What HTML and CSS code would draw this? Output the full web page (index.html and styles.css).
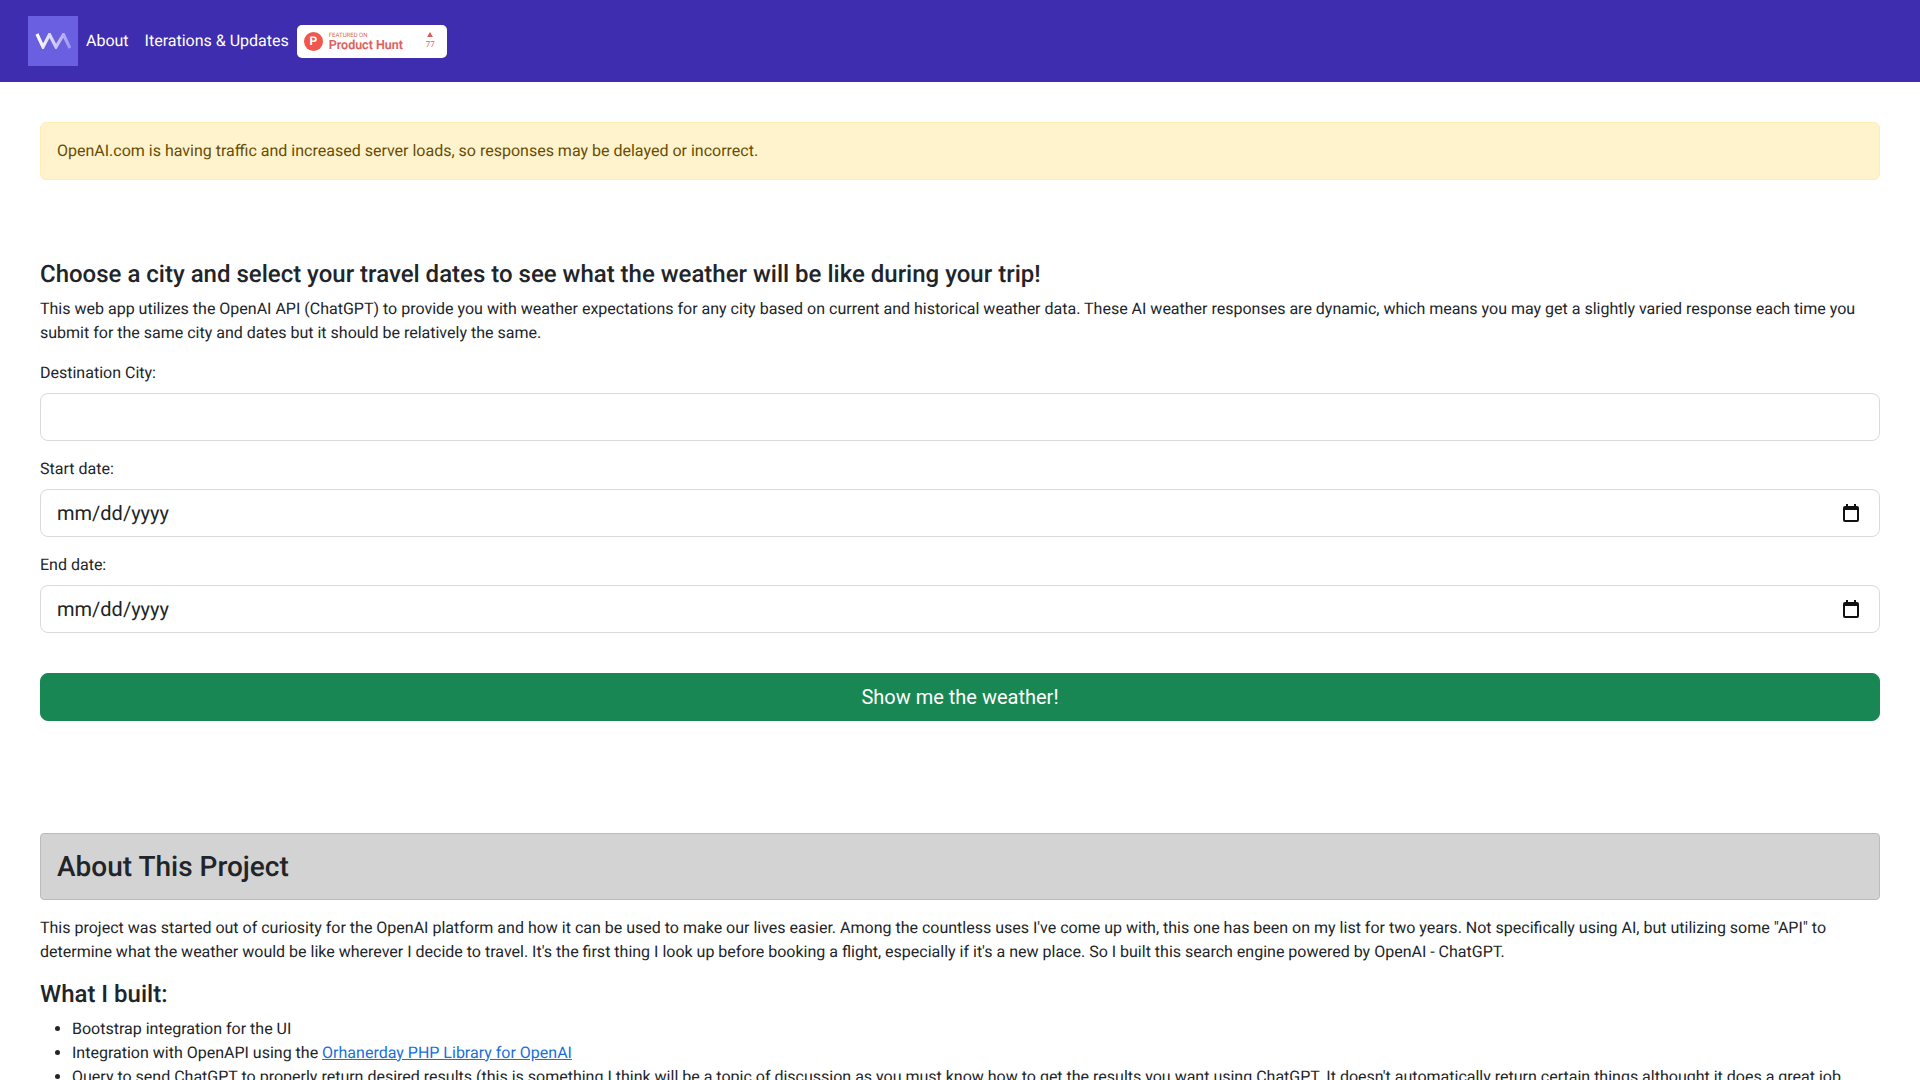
FILE: index.html
```html
<!DOCTYPE html>
<html lang="en">
<head>
<meta charset="utf-8">
<title>AI Weather</title>
<link rel="stylesheet" href="styles.css">
</head>
<body>
<nav class="navbar">
  <a class="logo" href="#">
    <svg viewBox="0 0 36 16" width="36" height="16">
      <defs><linearGradient id="wm" x1="0" x2="1" y1="0" y2="0"><stop offset="0" stop-color="#ffffff"/><stop offset="0.5" stop-color="#d5d0fa"/><stop offset="1" stop-color="#9f97ee"/></linearGradient></defs>
      <path class="wm" d="M2 1 L8 14 L14.5 1.5 L21 14 L28.5 1.5 L35 15" stroke="url(#wm)"/>
    </svg>
  </a>
  <a class="nav-link" href="#">About</a>
  <a class="nav-link" href="#">Iterations &amp; Updates</a>
  <a class="ph" href="#">
    <span class="ph-circle">P</span>
    <span class="ph-text"><span class="ph-small">FEATURED ON</span><span class="ph-name">Product Hunt</span></span>
    <span class="ph-votes"><span class="ph-tri"></span><span class="ph-count">77</span></span>
  </a>
</nav>
<main class="container">
  <div class="alert">OpenAI.com is having traffic and increased server loads, so responses may be delayed or incorrect.</div>
  <h1 class="title">Choose a city and select your travel dates to see what the weather will be like during your trip!</h1>
  <p class="para">This web app utilizes the OpenAI API (ChatGPT) to provide you with weather expectations for any city based on current and historical weather data. These AI weather responses are dynamic, which means you may get a slightly varied response each time you submit for the same city and dates but it should be relatively the same.</p>
  <form class="form">
    <label class="label" for="city">Destination City:</label>
    <input class="control" id="city" type="text">
    <label class="label" for="start">Start date:</label>
    <div class="control date" id="start"><span>mm/dd/yyyy</span>
      <svg class="cal" viewBox="0 0 16 18" width="16" height="18"><path d="M3 0h2v2h6V0h2v2h1a2 2 0 0 1 2 2v12a2 2 0 0 1-2 2H2a2 2 0 0 1-2-2V4a2 2 0 0 1 2-2h1V0zM2 6v10h12V6H2z"/></svg>
    </div>
    <label class="label" for="end">End date:</label>
    <div class="control date" id="end"><span>mm/dd/yyyy</span>
      <svg class="cal" viewBox="0 0 16 18" width="16" height="18"><path d="M3 0h2v2h6V0h2v2h1a2 2 0 0 1 2 2v12a2 2 0 0 1-2 2H2a2 2 0 0 1-2-2V4a2 2 0 0 1 2-2h1V0zM2 6v10h12V6H2z"/></svg>
    </div>
    <button class="btn" type="button">Show me the weather!</button>
  </form>
  <div class="about-head"><h2>About This Project</h2></div>
  <p class="para">This project was started out of curiosity for the OpenAI platform and how it can be used to make our lives easier. Among the countless uses I've come up with, this one has been on my list for two years. Not specifically using AI, but utilizing some "API" to determine what the weather would be like wherever I decide to travel. It's the first thing I look up before booking a flight, especially if it's a new place. So I built this search engine powered by OpenAI - ChatGPT.</p>
  <h3 class="sub">What I built:</h3>
  <ul class="list">
    <li>Bootstrap integration for the UI</li>
    <li>Integration with OpenAPI using the <a href="#">Orhanerday PHP Library for OpenAI</a></li>
    <li>Query to send ChatGPT to properly return desired results (this is something I think will be a topic of discussion as you must know how to get the results you want using ChatGPT. It doesn't automatically return certain things althought it does a great job</li>
  </ul>
</main>
</body>
</html>
```
FILE: styles.css
```css
* { box-sizing: border-box; }
html { overflow: hidden; height: 100%; }
body { margin: 0; height: 100%; overflow: hidden; font-family: Roboto, "Liberation Sans", sans-serif; font-size: 16px; line-height: 1.5; color: #212529; background: #fff; text-rendering: geometricPrecision; }
.navbar { height: 82px; background: #3f2daf; display: flex; align-items: center; padding-left: 28px; }
.logo { width: 50px; height: 50px; background: #6a5fe0; display: flex; align-items: center; justify-content: center; }
.wm { fill: none; stroke-width: 3.2; }
.nav-link { color: #fff; text-decoration: none; padding: 0 8px; }
.ph { width: 150px; height: 33px; background: #fff; border-radius: 5px; display: flex; align-items: center; padding: 0 12px 0 7px; color: #dc5f5a; text-decoration: none; }
.ph-circle { width: 19px; height: 19px; border-radius: 50%; background: #f0564c; color: #fff; font-size: 12px; font-weight: 700; line-height: 19px; text-align: center; flex: none; }
.ph-text { display: flex; flex-direction: column; margin-left: 6px; padding-top: 3px; flex: 1; }
.ph-small { font-size: 6px; line-height: 6px; font-weight: 400; }
.ph-name { font-size: 12.5px; line-height: 14px; font-weight: 500; -webkit-text-stroke: 0.2px #dc5f5a; }
.ph-votes { display: flex; flex-direction: column; align-items: center; }
.ph-tri { width: 0; height: 0; border-left: 3px solid transparent; border-right: 3px solid transparent; border-bottom: 5px solid #dc5f5a; }
.ph-count { font-size: 8px; line-height: 10px; margin-top: 3px; }
.container { padding: 40px 40px 0; }
.alert { height: 58px; padding: 16px; background: #fff3cd; border: 1px solid #ffecb5; border-radius: 6px; color: #664d03; }
.title { font-size: 24px; font-weight: 500; line-height: 1.2; margin: 80px 0 8px; }
.para { margin: 0 0 16px; }
.form { display: flex; flex-direction: column; }
.label { display: block; margin-bottom: 8px; }
.control { display: block; width: 100%; height: 48px; margin-bottom: 16px; padding: 8px 16px; font: inherit; font-size: 20px; color: #212529; background: #fff; border: 1px solid #d8dbde; border-radius: 8px; outline: none; }
.date { display: flex; align-items: center; justify-content: space-between; }
.cal { fill: #111; margin-right: 4px; }
.btn { height: 48px; margin-top: 24px; font: inherit; font-size: 20px; color: #fff; background: #198754; border: 1px solid #198754; border-radius: 8px; }
.about-head { margin-top: 112px; height: 67px; padding: 0 16px; background: #d3d3d3; border: 1px solid #bbb; border-radius: 4px; display: flex; align-items: center; margin-bottom: 16px; }
.about-head h2 { margin: 0; font-size: 28px; font-weight: 500; line-height: 1.2; }
.sub { margin: 1px 0 8px; font-size: 24px; font-weight: 500; line-height: 1.2; }
.list { margin: 0; padding-left: 32px; }
.list a { color: #1a6fd8; }
```
